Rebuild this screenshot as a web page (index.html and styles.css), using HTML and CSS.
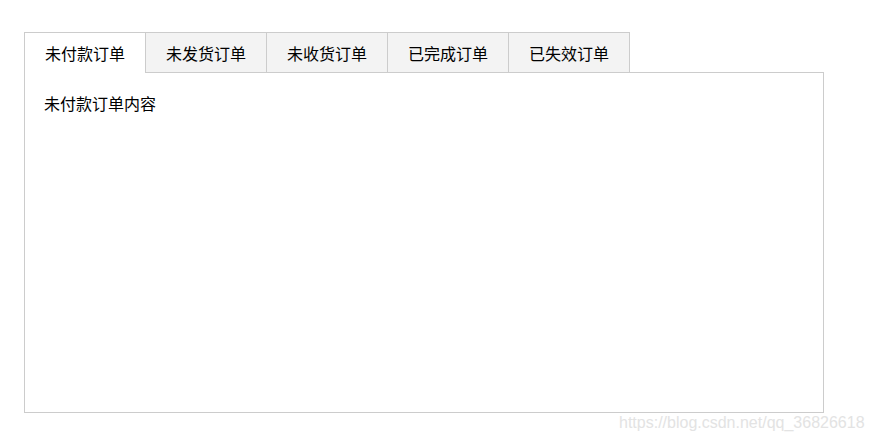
FILE: index.html
```html
<!DOCTYPE html>
<html lang="zh">
<head>
<meta charset="utf-8">
<title>订单</title>
<link rel="stylesheet" href="styles.css">
</head>
<body>
<div class="wrap">
  <ul class="tabs">
    <li class="tab active">未付款订单</li>
    <li class="tab">未发货订单</li>
    <li class="tab">未收货订单</li>
    <li class="tab">已完成订单</li>
    <li class="tab">已失效订单</li>
  </ul>
  <div class="panel">未付款订单内容</div>
</div>
<div class="watermark">https://blog.csdn.net/qq_36826618</div>
</body>
</html>
```
FILE: styles.css
```css
html, body {
  margin: 0;
  padding: 0;
  background: #fff;
}
body {
  font-family: "Microsoft YaHei", "Noto Sans CJK SC", sans-serif;
  font-size: 16px;
  color: #000;
}
.wrap {
  padding: 32px 0 0 24px;
  width: 800px;
}
.tabs {
  display: flex;
  margin: 0;
  padding: 0;
  list-style: none;
}
.tab {
  width: 120px;
  height: 39px;
  line-height: 40px;
  text-align: center;
  background: #f3f3f3;
  border: 1px solid #ccc;
  border-left: none;
  border-bottom: none;
}
.tab:first-child {
  border-left: 1px solid #ccc;
}
.tab.active {
  background: #fff;
  position: relative;
  margin-bottom: -1px;
  height: 40px;
  z-index: 1;
}
.panel {
  box-sizing: border-box;
  width: 800px;
  height: 341px;
  border: 1px solid #ccc;
  padding: 18px 19px;
  line-height: 24px;
}
.watermark {
  position: absolute;
  left: 619px;
  top: 414px;
  font-family: "Liberation Sans", Arial, sans-serif;
  font-size: 16px;
  color: #e3e3e3;
  white-space: nowrap;
}
```
